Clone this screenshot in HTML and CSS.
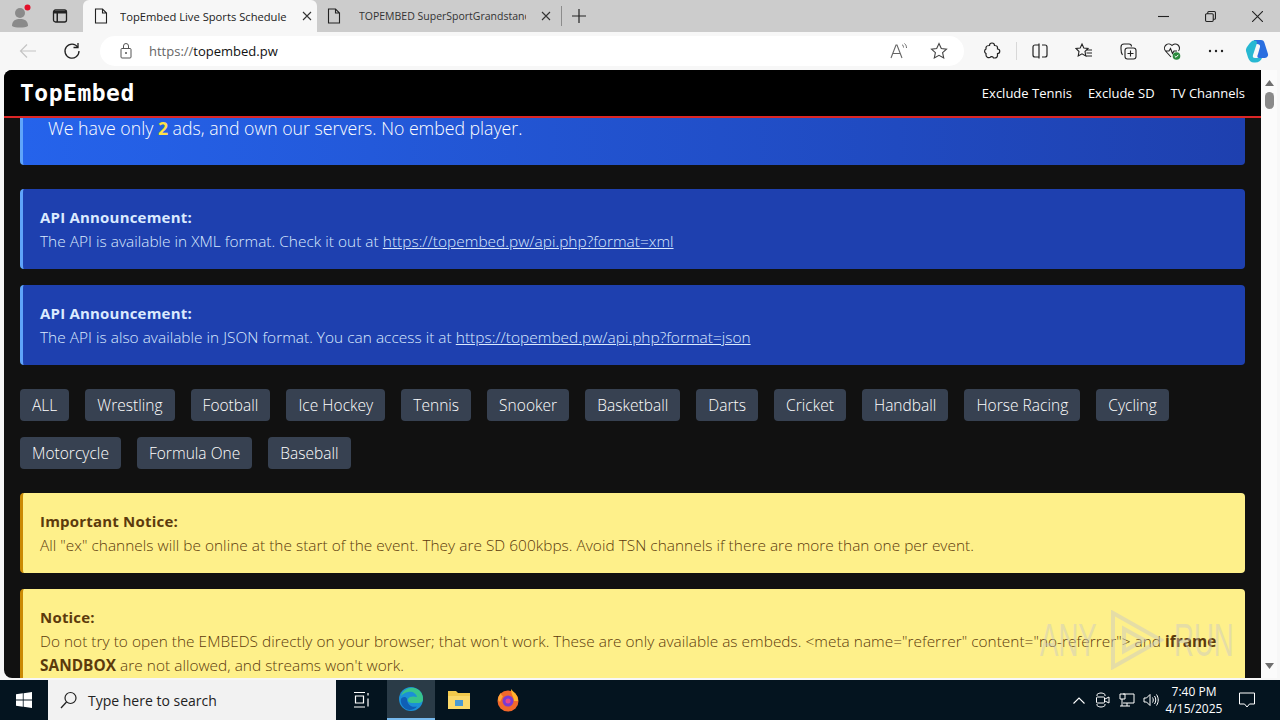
FILE: index.html
```html
<!DOCTYPE html>
<html lang="en">
<head>
<meta charset="utf-8">
<title>TopEmbed Live Sports Schedule</title>
<link rel="stylesheet" href="styles.css">
</head>
<body>
<div class="window">
  <div class="tabstrip">
    <div class="profile">
      <svg width="24" height="24" viewBox="0 0 24 24"><circle cx="10" cy="9" r="5" fill="#8a8a8a"/><path d="M2 22c0-6 4-7 8-7s8 1 8 7c-3 2-13 2-16 0z" fill="#8a8a8a"/><circle cx="17.500" cy="3.500" r="3" fill="#e3102a"/></svg>
    </div>
    <div class="tabs-btn">
      <svg width="16" height="16" viewBox="0 0 16 16"><rect x="1.500" y="2" width="13" height="12" rx="2" fill="none" stroke="#222" stroke-width="1.300"/><path d="M2 3h12v2.500H6V14H4.500V5.500H2z" fill="#222"/></svg>
    </div>
    <div class="tab tab-active">
      <svg class="doc" width="14" height="16" viewBox="0 0 14 16"><path d="M1.500 1h7l4 4v10h-11zM8.500 1v4h4" fill="none" stroke="#222" stroke-width="1.100"/></svg>
      <span class="tab-title">TopEmbed Live Sports Schedule</span>
      <svg class="tab-x" width="10" height="10" viewBox="0 0 10 10"><path d="M1 1l8 8M9 1l-8 8" stroke="#333" stroke-width="1.100"/></svg>
    </div>
    <div class="tab tab-idle">
      <svg class="doc" width="14" height="16" viewBox="0 0 14 16"><path d="M1.500 1h7l4 4v10h-11zM8.500 1v4h4" fill="none" stroke="#222" stroke-width="1.100"/></svg>
      <span class="tab-title tab-fade">TOPEMBED SuperSportGrandstand</span>
      <svg class="tab-x" width="10" height="10" viewBox="0 0 10 10"><path d="M1 1l8 8M9 1l-8 8" stroke="#333" stroke-width="1.100"/></svg>
    </div>
    <div class="tab-sep"></div>
    <svg class="tab-plus" width="14" height="14" viewBox="0 0 14 14"><path d="M7 0v14M0 7h14" stroke="#222" stroke-width="1.200"/></svg>
    <div class="window-controls">
      <svg width="10" height="10" viewBox="0 0 10 10"><path d="M0 5h10" stroke="#222" stroke-width="1"/></svg>
      <svg width="10" height="10" viewBox="0 0 10 10"><path d="M2.500 2.500V1.500a1 1 0 0 1 1-1h5a1 1 0 0 1 1 1v5a1 1 0 0 1-1 1h-1M.5 3.500a1 1 0 0 1 1-1h5a1 1 0 0 1 1 1v5a1 1 0 0 1-1 1h-5a1 1 0 0 1-1-1z" fill="none" stroke="#222" stroke-width="1"/></svg>
      <svg width="10" height="10" viewBox="0 0 10 10"><path d="M0 0l10 10M10 0L0 10" stroke="#222" stroke-width="1"/></svg>
    </div>
  </div>
  <div class="toolbar">
    <svg class="nav-back" width="18" height="16" viewBox="0 0 18 16"><path d="M17 8H1.500M8 1.500L1.500 8 8 14.500" fill="none" stroke="#c4c4c4" stroke-width="1.200"/></svg>
    <svg class="nav-reload" width="18" height="18" viewBox="0 0 18 18"><path d="M14.800 5.200A7 7 0 1 0 16 9" fill="none" stroke="#222" stroke-width="1.300"/><path d="M15 1v4.500h-4.500" fill="none" stroke="#222" stroke-width="1.300"/></svg>
    <div class="address">
      <svg class="lock" width="12" height="16" viewBox="0 0 12 16"><rect x="1" y="5.500" width="10" height="9.500" rx="1" fill="none" stroke="#555" stroke-width="1"/><path d="M3.500 5.500V3a2.500 2.500 0 0 1 5 0v2.500" fill="none" stroke="#555"/><circle cx="6" cy="10" r="1" fill="#555"/></svg>
      <span class="url"><span class="url-dim">https://</span>topembed.pw</span>
      <svg class="addr-read" width="18" height="16" viewBox="0 0 18 16"><path d="M1 15L6 2h1l5 13M3 10.500h7" fill="none" stroke="#666" stroke-width="1.100"/><path d="M12 1.500c1 .8 1.500 1.700 1.500 3M14.500 .5c1.300 1.200 2 2.500 2 4.500" fill="none" stroke="#666"/></svg>
      <svg class="addr-star" width="18" height="18" viewBox="0 0 18 18"><path d="M9 1.500l2.300 5 5.200.6-3.900 3.600 1.100 5.300L9 13.300 4.300 16l1.100-5.300L1.500 7.100l5.200-.6z" fill="none" stroke="#444" stroke-width="1.100"/></svg>
    </div>
    <div class="tool-icons">
      <svg width="18" height="18" viewBox="0 0 18 18"><path d="M6.500 3.500a2.500 2.500 0 0 1 5 0c1.500 0 3 .5 3 2v1.500a2 2 0 0 1 0 4.500v2c0 1.500-1.500 2.500-3 2.500h-1a2 2 0 0 0-3.500-.5c-2 .5-4-.5-4-2.500v-1.500a2.500 2.500 0 0 1 0-4.500V5.500c0-1.500 2-2 3.500-2z" fill="none" stroke="#222" stroke-width="1.200"/></svg>
      <div class="tool-sep"></div>
      <svg width="18" height="18" viewBox="0 0 18 18"><path d="M8 3H4a2 2 0 0 0-2 2v8a2 2 0 0 0 2 2h4M8 1.500v15M11 3h3a2 2 0 0 1 2 2v8a2 2 0 0 1-2 2h-3" fill="none" stroke="#222" stroke-width="1.200"/></svg>
      <svg width="18" height="18" viewBox="0 0 18 18"><path d="M7 2l1.800 4 4.200.5-3 3 .8 4.500L7 11.800 3.200 14l.8-4.500-3-3L5.200 6zM12 8h5M11.500 11h5.500M10.500 14H17" fill="none" stroke="#222" stroke-width="1.100"/></svg>
      <svg width="18" height="18" viewBox="0 0 18 18"><rect x="6" y="6" width="11" height="11" rx="2.500" fill="none" stroke="#222" stroke-width="1.100"/><path d="M11.500 8.500v6M8.500 11.500h6M3.500 13C2 11 2 9 2 7V5a3 3 0 0 1 3-3h5a2.500 2.500 0 0 1 2.500 2.500" fill="none" stroke="#222" stroke-width="1.100"/></svg>
      <svg width="18" height="18" viewBox="0 0 18 18"><path d="M8 15L2.500 9A4.200 4.200 0 0 1 9 3.500 4.200 4.200 0 0 1 15.500 9M2.500 9h3.500l1.500-2.500 2 5 1.500-2.500h3" fill="none" stroke="#222" stroke-width="1.100"/><circle cx="13.500" cy="14" r="3.800" fill="#2b8a3e"/><path d="M11.700 14l1.300 1.300 2.300-2.500" fill="none" stroke="#fff"/></svg>
      <svg width="18" height="18" viewBox="0 0 18 18"><circle cx="3" cy="9" r="1.200" fill="#222"/><circle cx="9" cy="9" r="1.200" fill="#222"/><circle cx="15" cy="9" r="1.200" fill="#222"/></svg>
      <svg class="copilot" width="24" height="24" viewBox="0 0 24 24"><path d="M9 1h7c2 0 3 1 3.500 3L23 15c.5 2.500-1.500 4-4 4h-5c-2 0-2-2-1-4l2-7c.5-2-1-3-3-3h-3z" fill="#2a6fe0"/><path d="M6 3c2-2 6-2 6 1L8 16c-.5 2 0 3 2 3h7c-1 3-4 5-8 4.500-3 0-5-2-6-5L1 12c-.5-3 3-7 5-9z" fill="#27b8d2"/></svg>
    </div>
  </div>
  <div class="viewport">
    <div class="page">
      <header class="site-header">
        <span class="logo">TopEmbed</span>
        <nav class="site-nav"><a>Exclude Tennis</a><a>Exclude SD</a><a>TV Channels</a></nav>
      </header>
      <main class="content">
        <div class="hero"><p>We have only <b class="hl">2</b> ads, and own our servers. No embed player.</p></div>
        <div class="notice notice-blue gap-l">
          <h3>API Announcement:</h3>
          <p>The API is available in XML format. Check it out at <a>https://topembed.pw/api.php?format=xml</a></p>
        </div>
        <div class="notice notice-blue gap-s">
          <h3>API Announcement:</h3>
          <p>The API is also available in JSON format. You can access it at <a>https://topembed.pw/api.php?format=json</a></p>
        </div>
        <div class="pills gap-l">
          <span>ALL</span><span>Wrestling</span><span>Football</span><span>Ice Hockey</span><span>Tennis</span><span>Snooker</span><span>Basketball</span><span>Darts</span><span>Cricket</span><span>Handball</span><span>Horse Racing</span><span>Cycling</span><span>Motorcycle</span><span>Formula One</span><span>Baseball</span>
        </div>
        <div class="notice notice-yellow gap-l">
          <h3>Important Notice:</h3>
          <p>All "ex" channels will be online at the start of the event. They are SD 600kbps. Avoid TSN channels if there are more than one per event.</p>
        </div>
        <div class="notice notice-yellow gap-s">
          <h3>Notice:</h3>
          <p>Do not try to open the EMBEDS directly on your browser; that won't work. These are only available as embeds. &lt;meta name="referrer" content="no-referrer"&gt; and <b>iframe SANDBOX</b> are not allowed, and streams won't work.</p>
        </div>
      </main>
    </div>
    <div class="scrollbar">
      <svg width="9" height="6" viewBox="0 0 9 6"><path d="M4.500 0L9 6H0z" fill="#6e6e6e"/></svg>
      <div class="thumb"></div>
      <svg class="scroll-down" width="9" height="6" viewBox="0 0 9 6"><path d="M4.500 6L9 0H0z" fill="#6e6e6e"/></svg>
    </div>
  </div>
  <div class="taskbar">
    <div class="start"><svg width="16" height="16" viewBox="0 0 16 16"><path d="M0 2.300l6.800-1v6.300H0zM7.600 1.200L16 0v7.600H7.600zM0 8.400h6.800v6.300L0 13.700zM7.600 8.400H16V16l-8.400-1.200z" fill="#fff"/></svg></div>
    <div class="search">
      <svg width="18" height="18" viewBox="0 0 18 18"><circle cx="10.500" cy="7" r="5.500" fill="none" stroke="#222" stroke-width="1.200"/><path d="M6.500 11L1 17" stroke="#222" stroke-width="1.300"/></svg>
      <span>Type here to search</span>
    </div>
    <div class="task-item task-view"><svg width="18" height="16" viewBox="0 0 18 16"><path d="M1 .5h11M1 15h11M2.500 4h8v7h-8zM15 1v2.500M15 6.500v8" fill="none" stroke="#fff" stroke-width="1.200"/></svg></div>
    <div class="task-item task-active"><svg width="24" height="24" viewBox="0 0 24 24"><circle cx="12" cy="12" r="12" fill="#1b8fd6"/><path d="M2 9C4 2 12-1 18 2c4 2 6 6 6 10 0 3-2 4-5 4h-6c-3 0-5-2-4-4 1-3 6-3 9-2-1-4-5-6-9-5-3 .6-5 2-7 4z" fill="#37c38c"/><path d="M8 12c0 5 4 9 10 7.500-2 3-7 4-10 3C4 21 1 16 2 12c1-2 5-3 6 0z" fill="#0f5fb5"/></svg></div>
    <div class="task-item"><svg width="22" height="20" viewBox="0 0 22 20"><path d="M0 1h8l2 2h12v16H0z" fill="#f2c94c"/><path d="M0 6h22v13H0z" fill="#fbd96a"/><path d="M7 10h8v6H7z" fill="#4a9ad4"/></svg></div>
    <div class="task-item task-fox"><svg width="24" height="24" viewBox="0 0 24 24"><circle cx="12" cy="13" r="10.500" fill="#f2682a"/><path d="M15 1c2 3 7 5 7 12h-4c0-4-3-6-3-12z" fill="#ffb32c"/><path d="M2 12c0-3 1-5 3-7 0 2 1 3 2 3l-3 6z" fill="#ffa436"/><circle cx="12" cy="13" r="5.500" fill="#7a3bd1"/><circle cx="12" cy="13" r="2.500" fill="#e8458c"/></svg></div>
    <div class="tray">
      <svg width="12" height="7" viewBox="0 0 12 7"><path d="M.5 6.500L6 1l5.500 5.500" fill="none" stroke="#fff" stroke-width="1.100"/></svg>
      <svg width="14" height="16" viewBox="0 0 14 16"><path d="M1 4V2.500C3 .5 7 .5 9 2.500V4M1 12v1.500c2 2 6 2 8 0V12" fill="none" stroke="#fff"/><rect x=".5" y="5" width="8" height="6" rx="1" fill="none" stroke="#fff"/><path d="M9 7l4-2v6l-4-2" fill="none" stroke="#fff"/></svg>
      <svg width="16" height="14" viewBox="0 0 16 14"><path d="M4 1h11v9H4M1 1h5v5H1zM3 6v7M1 13h10M8 10v3" fill="none" stroke="#fff"/></svg>
      <svg width="16" height="14" viewBox="0 0 16 14"><path d="M1 5h2.500L7 1.500v11L3.500 9H1zM9.500 4.500c1 1.500 1 3.500 0 5M11.500 3c1.700 2.500 1.700 5.500 0 8M13.500 1.500c2.300 3.500 2.300 7.500 0 11" fill="none" stroke="#fff"/></svg>
    </div>
    <div class="clock"><span>7:40 PM</span><span>4/15/2025</span></div>
    <div class="notif"><svg width="16" height="16" viewBox="0 0 16 16"><path d="M.5 1h15v11h-5L8 15l-2.500-3h-5z" fill="none" stroke="#fff"/></svg></div>
  </div>
  <div class="watermark">
    <span class="wm-text">ANY</span>
    <svg class="wm-play" width="54" height="60" viewBox="0 0 54 60"><path d="M3 3l48 27L3 57z M14 19v22l20-11z" fill="none" stroke="#c8c8c8" stroke-width="4"/></svg>
    <span class="wm-text">RUN</span>
  </div>
</div>
</body>
</html>
```

FILE: styles.css
```css
* { box-sizing: border-box; }
html, body { margin: 0; padding: 0; height: 100%; overflow: hidden; }
body { font-family: "Open Sans", "Noto Sans", sans-serif; background: #f7f7f7; }
p, h3 { margin: 0; }

.window { position: relative; width: 1280px; height: 720px; display: flex; flex-direction: column; overflow: hidden; }

.tabstrip { height: 32px; flex: none; background: #cccccc; display: flex; align-items: center; position: relative; }
.profile { width: 44px; height: 32px; display: flex; align-items: center; justify-content: center; }
.tabs-btn { width: 32px; display: flex; justify-content: center; }
.tab { display: flex; align-items: center; height: 32px; font-size: 11.200px; color: #222; }
.tab-active { width: 234px; margin-left: 7px; background: #f7f7f7; border-radius: 6px 6px 0 0; padding: 0 5px 0 11px; }
.tab-idle { width: 244px; padding: 0 10px 0 10px; }
.doc { flex: none; }
.tab-title { flex: 1; margin-left: 12px; white-space: nowrap; overflow: hidden; }
.tab-fade { margin-left: 18px; font-size: 10.500px; color: #333; }
.tab-x { flex: none; margin-left: 15px; }
.tab-sep { width: 1px; height: 20px; background: #8c8c8c; }
.tab-plus { margin-left: 10px; }
.window-controls { margin-left: auto; display: flex; gap: 36px; padding-right: 17px; align-items: center; }
.window-controls svg { width: 11px; height: 11px; }

.toolbar { height: 38px; flex: none; background: #f7f7f7; display: flex; align-items: center; }
.nav-back { margin-left: 19px; }
.nav-reload { margin-left: 26px; }
.address { margin-left: 19px; width: 864px; height: 30px; background: #fff; border-radius: 15px; display: flex; align-items: center; padding-left: 20px; }
.url { margin-left: 17px; font-size: 13px; color: #111; flex: 1; }
.url-dim { color: #666; }
.addr-read { margin-right: 22px; }
.addr-star { margin-right: 16px; }
.tool-icons { display: flex; align-items: center; margin-left: 19px; gap: 26px; }
.tool-sep { width: 1px; height: 18px; background: #d8d8d8; margin: 0 -11.500px; }
.copilot { margin-left: -6px; }

.viewport { height: 608px; flex: none; display: flex; padding: 0 3px 0 4px; }
.page { width: 1257px; background: #111111; border-radius: 8px 0 0 8px; overflow: hidden; display: flex; flex-direction: column; }
.site-header { height: 48px; flex: none; background: #000; border-bottom: 2px solid #dc2626; display: flex; align-items: center; justify-content: space-between; padding: 0 16px; }
.logo { font-family: "DejaVu Sans Mono", monospace; font-weight: 700; font-size: 23px; color: #fff; letter-spacing: 0.500px; }
.site-nav { display: flex; gap: 16px; font-size: 13px; color: #fff; }
.content { padding: 0 16px; flex: 1; overflow: hidden; }

.hero { height: 47px; background: linear-gradient(90deg, #2563eb, #1e40af); border-left: 3px solid #60a5fa; border-radius: 0 0 4px 4px; padding-left: 25px; color: #fff; font-size: 17.700px; line-height: 20px; font-weight: 300; }
.hl { color: #fde047; font-weight: 700; }

.gap-l { margin-top: 24px; }
.gap-s { margin-top: 16px; }
.notice { border-left: 3px solid; border-radius: 4px; padding: 16px 17px 15px; font-size: 15.400px; line-height: 24px; letter-spacing: 0.030px; font-weight: 300; }
.notice p { padding-top: 1px; }
.notice b { font-weight: 700; }
.notice h3 { font-size: 15px; font-weight: 700; line-height: 24px; letter-spacing: 0.200px; }
.notice a { text-decoration: underline; }
.notice-blue { background: #1e40af; border-color: #60a5fa; color: #dbeafe; }
.notice-yellow { background: #fef08a; border-color: #ca8a04; color: #5c3a0c; }

.pills { display: flex; flex-wrap: wrap; gap: 16px; }
.pills span { height: 32px; padding: 0 12px; background: #374151; color: #fff; border-radius: 4px; font-size: 15.500px; line-height: 32px; letter-spacing: 0.030px; font-weight: 300; }

.scrollbar { width: 16px; background: #fbfbfb; display: flex; flex-direction: column; align-items: center; padding: 10px 0 9px; }
.thumb { width: 9px; height: 17px; background: #8a8a8a; border-radius: 5px; margin-top: 6px; }
.scroll-down { margin-top: auto; }

.taskbar { height: 42px; flex: none; margin-top: auto; background: #04141f; display: flex; align-items: center; color: #fff; border-top: 2px solid #f7f7f7; }
.start { width: 48px; display: flex; justify-content: center; }
.search { width: 288px; height: 40px; background: #f2f2f2; color: #222; display: flex; align-items: center; gap: 10px; padding-left: 12px; font-size: 14px; }
.task-item { width: 48px; height: 40px; display: flex; align-items: center; justify-content: center; }
.task-view { width: 51px; }
.task-fox { width: 50px; }
.task-active { background: #2a3b47; border-bottom: 2px solid #76b9ed; }
.tray { margin-left: auto; display: grid; grid-template-columns: repeat(4, 24px); justify-items: center; align-items: center; }
.clock { width: 60px; display: flex; flex-direction: column; align-items: center; font-size: 12px; line-height: 17px; margin: 0 8px 0 1px; }
.notif { width: 48px; padding-right: 18px; display: flex; justify-content: center; }

.watermark { position: absolute; left: 1040px; top: 610px; display: flex; align-items: center; gap: 10px; opacity: 0.45; color: #c8c8c8; font-size: 46px; line-height: 60px; font-family: "Liberation Sans", sans-serif; pointer-events: none; }
.wm-text { display: inline-block; width: 60px; transform: scaleX(0.6); transform-origin: left center; white-space: nowrap; }
```
